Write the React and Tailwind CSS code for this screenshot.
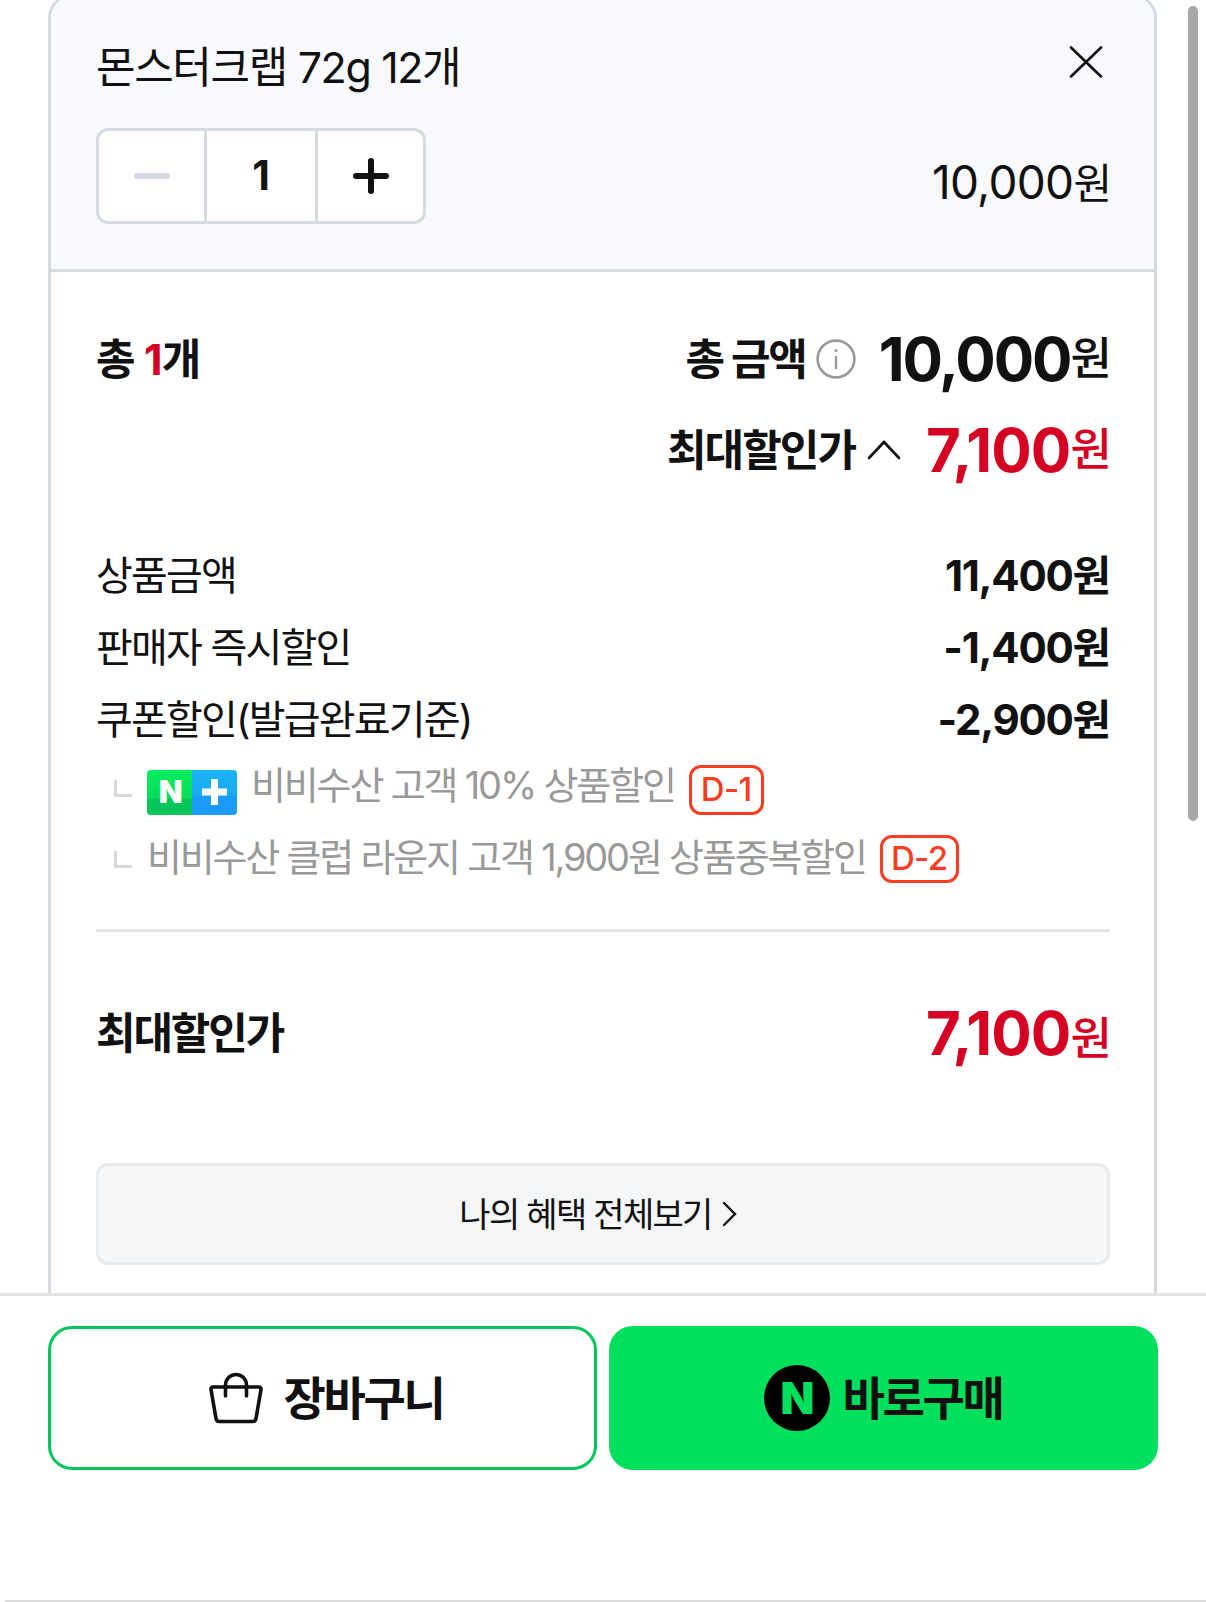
const font = "font-['Inter','Noto_Sans_CJK_KR',sans-serif]"

const Won = ({ className = '' }) => <span className={`text-[45px] font-medium tracking-[-0.04em] ${className}`}>원</span>

const DetailRow = ({ label, value }) => (
  <div className="h-[72px] flex items-center justify-between">
    <span className="text-[40px] tracking-[-0.045em] text-[#111]">{label}</span>
    <span className="mb-[2px] text-[42px] font-bold tracking-[-0.03em] text-[#111]">{value}</span>
  </div>
)

const Corner = ({ className = '' }) => <div className={`w-[18px] h-[17px] border-l-[3px] border-b-[3px] border-[#d8d8d8] ${className}`} />

const DayBadge = ({ children, className }) => (
  <span className={`flex items-center justify-center border-[3px] border-[#fa3c20] rounded-[12px] text-[33px] font-medium text-[#fa3c20] tracking-[-0.02em] ${className}`}>
    {children}
  </span>
)

export default function App() {
  return (
    <div className={`${font} relative w-[1206px] h-[1602px] bg-white overflow-hidden`}>
      {/* scrollbar */}
      <div className="absolute left-[1188px] top-[6px] w-[10px] h-[815px] rounded-full bg-[#a8a8a8]" />

      <div className="ml-[48px] w-[1109px] h-[1302px] -mt-[6px] border-x-[3px] border-t-[3px] border-[#d5dbe1] rounded-t-[24px] overflow-hidden">
        {/* selected option */}
        <div className="h-[275px] bg-[#f8f9fd] border-b-[3px] border-[#d5dbe1] pl-[45px] pr-[44px] flex flex-col">
          <div className="mt-[42px] h-[56px] flex items-center justify-between">
            <span className="text-[43px] tracking-[-0.032em] text-[#111]">몬스터크랩 72g 12개</span>
            <svg width="34" height="32" viewBox="0 0 34 32" className="mr-[7px] -mt-[11px]" fill="none" stroke="#111" strokeWidth="2.6" strokeLinecap="round">
              <path d="M2 1.5 32 30.5M32 1.5 2 30.5" />
            </svg>
          </div>
          <div className="mt-[33px] flex items-center justify-between">
            <div className="w-[330px] h-[96px] bg-white border-[3px] border-[#d5dbe1] rounded-[12px] flex">
              <div className="w-[108px] border-r-[3px] border-[#d5dbe1] flex items-center justify-center">
                <div className="w-[36px] h-[6px] rounded-full bg-[#d5dbe1]" />
              </div>
              <div className="w-[111px] border-r-[3px] border-[#d5dbe1] flex items-center justify-center text-[41px] font-bold text-[#111]">1</div>
              <div className="flex-1 flex items-center justify-center">
                <svg width="36" height="36" viewBox="0 0 36 36" fill="none" stroke="#111" strokeWidth="6" strokeLinecap="round">
                  <path d="M3 18h30M18 3v30" />
                </svg>
              </div>
            </div>
            <span className="mt-[12px] text-[46px] tracking-[-0.015em] text-[#111]">10,000<span className="text-[42px] tracking-[-0.05em]">원</span></span>
          </div>
        </div>

        <div className="pl-[45px] pr-[44px]">
          {/* totals */}
          <div className="mt-[52px] h-[70px] flex items-center justify-between">
            <span className="text-[43px] font-bold tracking-[-0.02em] text-[#111]">총 <span className="text-[#d50022]">1</span>개</span>
            <div className="flex items-center">
              <span className="text-[43px] font-bold tracking-[-0.05em] text-[#111]">총 금액</span>
              <svg width="40" height="40" viewBox="0 0 40 40" className="ml-[10px]" fill="none" stroke="#999" strokeWidth="2.6">
                <circle cx="20" cy="20" r="18.4" />
                <path d="M20 17v13" strokeWidth="2.4" />
                <circle cx="20" cy="11.5" r="1.6" fill="#999" stroke="none" />
              </svg>
              <span className="ml-[23px] text-[60px] font-bold tracking-[-0.035em] text-[#111]">10,000</span>
              <Won className="text-[#111]" />
            </div>
          </div>
          <div className="mt-[21px] h-[70px] flex items-center justify-end">
            <span className="text-[43px] font-bold tracking-[-0.045em] text-[#111]">최대할인가</span>
            <svg width="34" height="20" viewBox="0 0 34 20" className="ml-[12px]" fill="none" stroke="#111" strokeWidth="2.6" strokeLinecap="round">
              <path d="M2 18 17 2l15 16" />
            </svg>
            <span className="ml-[25px] text-[60px] font-bold tracking-[-0.015em] text-[#d50022]">7,100</span>
            <Won className="text-[#d50022]" />
          </div>

          {/* price breakdown */}
          <div className="mt-[55px]">
            <DetailRow label="상품금액" value="11,400원" />
            <DetailRow label="판매자 즉시할인" value="-1,400원" />
            <DetailRow label="쿠폰할인(발급완료기준)" value="-2,900원" />
          </div>
          <div className="mt-[9px] ml-[18px] h-[52px] flex items-center text-[38px] tracking-[-0.057em] text-[#999]">
            <Corner className="mb-[6px]" />
            <div className="ml-[15px] mt-[2px] w-[90px] h-[45px] rounded-[4px] overflow-hidden flex text-white font-black">
              <div className="w-[45px] bg-[linear-gradient(#04f05e_0%,#08dc5c_62%,#05c65a_66%,#05c65a_100%)] flex items-center justify-center text-[31px]">N</div>
              <div className="flex-1 bg-[linear-gradient(#1ab4f5_0%,#1aaaf6_55%,#1b9af8_60%,#1b9af8_100%)] flex items-center justify-center">
                <svg width="25" height="26" viewBox="0 0 25 26" fill="#fff">
                  <path d="M9 0h7v9.500h9v7h-9V26H9v-9.500H0v-7h9Z" />
                </svg>
              </div>
            </div>
            <span className="ml-[14px] mb-[12px]">비비수산 고객 10% 상품할인</span>
            <DayBadge className="ml-[14px] w-[75px] h-[50px] mb-[3px]">D-1</DayBadge>
          </div>
          <div className="mt-[17px] ml-[18px] h-[50px] flex items-center text-[38px] tracking-[-0.058em] text-[#999]">
            <Corner />
            <span className="ml-[15px] mb-[3px]">비비수산 클럽 라운지 고객 1,900원 상품중복할인</span>
            <DayBadge className="ml-[14px] w-[79px] h-[48px] mb-[1px]">D-2</DayBadge>
          </div>

          <div className="mt-[45px] h-[3px] bg-[#e5e5e5]" />

          <div className="mt-[63px] h-[76px] flex items-center justify-between">
            <span className="text-[43px] font-bold tracking-[-0.05em] text-[#111]">최대할인가</span>
            <div>
              <span className="text-[60px] font-bold tracking-[-0.015em] text-[#d50022]">7,100</span>
              <Won className="text-[#d50022]" />
            </div>
          </div>

          <div className="mt-[92px] h-[102px] pr-[10px] bg-[#f5f6f8] border-[3px] border-[#e8ebee] rounded-[12px] flex items-center justify-center gap-[10px] text-[34px] tracking-[-0.05em] text-[#111]">
            나의 혜택 전체보기
            <svg width="15" height="26" viewBox="0 0 15 26" fill="none" stroke="#111" strokeWidth="2.4" strokeLinecap="round">
              <path d="m2 2 11 11L2 24" />
            </svg>
          </div>
        </div>
      </div>

      {/* bottom buy bar */}
      <div className="relative h-[309px] bg-white border-t-[3px] border-[#e5e5e5] -mt-[3px]">
        <div className="mt-[30px] mx-[48px] flex gap-[12px]">
          <div className="w-[549px] h-[144px] pl-[8px] bg-white border-[3px] border-[#03c75a] rounded-[24px] flex items-center justify-center">
            <svg width="54" height="52" viewBox="0 0 54 52" fill="none" stroke="#111" strokeWidth="3.6" strokeLinejoin="round" strokeLinecap="round">
              <path d="M4 15h46a2 2 0 0 1 2 2.500L47 46.500a3.500 3.500 0 0 1-3.500 3H10.500a3.500 3.500 0 0 1-3.500-3L2 17.500A2 2 0 0 1 4 15Z" />
              <path d="M16.500 24V13a10.500 10.500 0 0 1 21 0v11" />
            </svg>
            <span className="ml-[20px] text-[46px] font-bold tracking-[-0.05em] text-[#111]">장바구니</span>
          </div>
          <div className="w-[549px] h-[144px] bg-[#00e05c] rounded-[24px] flex items-center justify-center">
            <div className="w-[66px] h-[66px] rounded-full bg-black flex items-center justify-center text-[44px] font-black text-[#00e05c]">N</div>
            <span className="ml-[12px] text-[46px] font-bold tracking-[-0.05em] text-[#111]">바로구매</span>
          </div>
        </div>
        <div className="absolute left-[5px] right-0 bottom-0 h-[2px] bg-[#dcdcdc]" />
      </div>
    </div>
  )
}
